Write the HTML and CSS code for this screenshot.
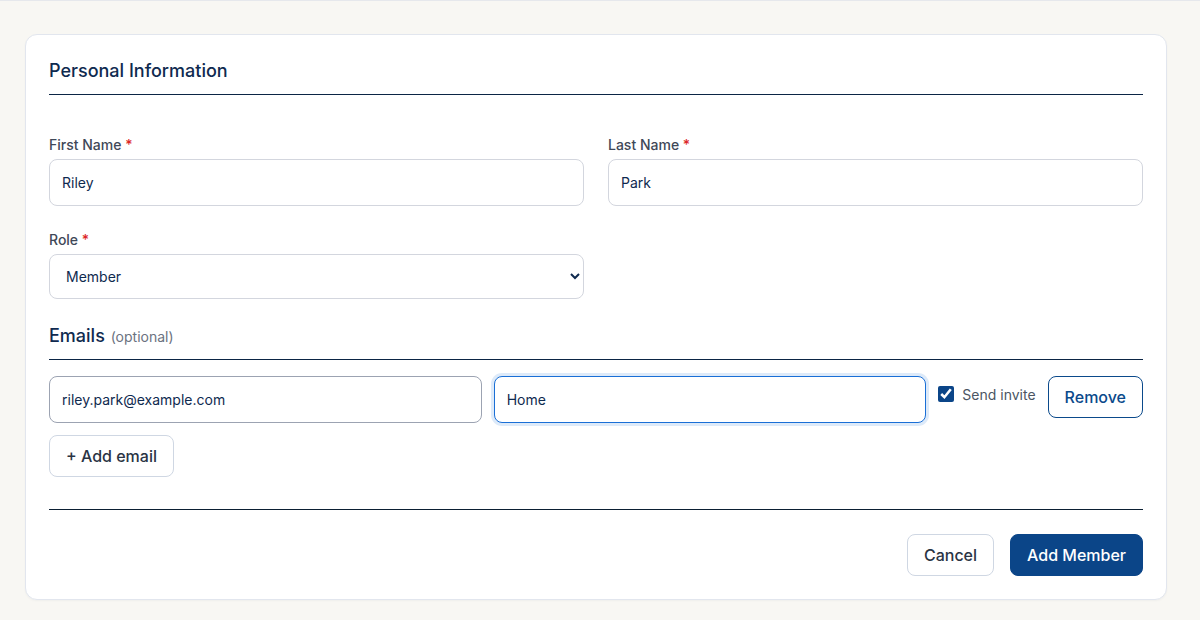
FILE: index.html
```html
<!DOCTYPE html>
<html lang="en">
<head>
    <meta charset="UTF-8">
    <meta name="viewport" content="width=device-width, initial-scale=1.0">
    <title>Add Member</title>
    <link rel="stylesheet" href="styles.css">
</head>
<body>

    <div class="card">
        <h2 class="section-title">Personal Information</h2>

        <div class="form-grid">
            <div class="field">
                <label for="firstName">First Name <span class="req">*</span></label>
                <input type="text" id="firstName" value="Riley">
            </div>
            <div class="field">
                <label for="lastName">Last Name <span class="req">*</span></label>
                <input type="text" id="lastName" value="Park">
            </div>
            <div class="field">
                <label for="role">Role <span class="req">*</span></label>
                <select id="role">
                    <option>Member</option>
                    <option>Admin</option>
                    <option>Viewer</option>
                </select>
            </div>
        </div>

        <h2 class="section-title emails-title">Emails <span class="optional">(optional)</span></h2>

        <div class="email-row">
            <input type="text" class="email-input" value="riley.park@example.com">
            <input type="text" class="label-input focused" value="Home">
            <label class="invite">
                <input type="checkbox" checked>
                Send invite
            </label>
            <button class="btn btn-outline">Remove</button>
        </div>

        <button class="btn btn-light add-email">+ Add email</button>

        <div class="form-actions">
            <button class="btn btn-light">Cancel</button>
            <button class="btn btn-primary">Add Member</button>
        </div>
    </div>

</body>
</html>
```

FILE: styles.css
```css
body {
    margin: 0;
    padding: 33px 33px 20px 25px;
    border-top: 1px solid #e6e8ec;
    background-color: #f8f7f3;
    font-family: Inter, "Noto Sans", sans-serif;
    color: #0f2a4f;
}
.card {
    background-color: #ffffff;
    border: 1px solid #e2e6ee;
    border-radius: 12px;
    padding: 24px 23px 23px 23px;
    box-shadow: 0 1px 2px rgba(15, 42, 79, 0.04);
}
.section-title {
    margin: 0;
    font-size: 18px;
    font-weight: 500;
    line-height: 24px;
    color: #0f2a4f;
    padding-bottom: 11px;
    border-bottom: 1px solid #0b2545;
}
.emails-title {
    margin-top: 25px;
    padding-bottom: 10px;
}
.optional {
    font-size: 14px;
    font-weight: 400;
    color: #6b7280;
    margin-left: 1px;
}
.form-grid {
    display: grid;
    grid-template-columns: 1fr 1fr;
    column-gap: 24px;
    row-gap: 24px;
    margin-top: 40px;
}
.field label {
    display: block;
    font-size: 14px;
    line-height: 20px;
    font-weight: 500;
    color: #3f4858;
    margin-bottom: 4px;
}
.req {
    color: #dc2626;
}
input[type="text"] {
    box-sizing: border-box;
    width: 100%;
    height: 47px;
    padding: 0 12px;
    border: 1px solid #d3d6de;
    border-radius: 8px;
    font-family: inherit;
    font-size: 14px;
    color: #0f2a4f;
    background: #ffffff;
    outline: none;
}
select {
    box-sizing: border-box;
    width: 100%;
    height: 45px;
    padding: 0 8px 0 12px;
    border: 1px solid #d3d6de;
    border-radius: 8px;
    font-family: inherit;
    font-size: 14px;
    color: #0f2a4f;
    background: #ffffff;
}
.email-row {
    display: flex;
    align-items: flex-start;
    gap: 12px;
    margin-top: 16px;
}
.email-row .email-input {
    flex: 1;
    border-color: #9ca3b2;
}
.email-row .label-input {
    flex: 1;
}
.focused {
    border: 1px solid #1a6fd6 !important;
    box-shadow: 0 0 0 3px rgba(26, 111, 214, 0.15);
}
.invite {
    display: flex;
    align-items: center;
    gap: 8px;
    height: 36px;
    font-size: 14px;
    color: #4b5563;
    white-space: nowrap;
}
.invite input {
    width: 16px;
    height: 16px;
    margin: 0;
    accent-color: #0b4588;
}
.btn {
    box-sizing: border-box;
    height: 42px;
    padding: 0 16px;
    border-radius: 8px;
    font-family: inherit;
    font-size: 16px;
    font-weight: 500;
    cursor: pointer;
}
.btn-outline {
    background: #ffffff;
    border: 1px solid #0b4a8b;
    color: #0b4a8b;
}
.btn-light {
    background: #ffffff;
    border: 1px solid #cfd7e3;
    color: #2a3444;
}
.btn-primary {
    background: #0b4588;
    border: 1px solid #0b4588;
    color: #ffffff;
}
.add-email {
    margin-top: 12px;
    display: block;
}
.form-actions {
    display: flex;
    justify-content: flex-end;
    gap: 16px;
    margin-top: 32px;
    padding-top: 24px;
    border-top: 1px solid #0b1f33;
}
```
